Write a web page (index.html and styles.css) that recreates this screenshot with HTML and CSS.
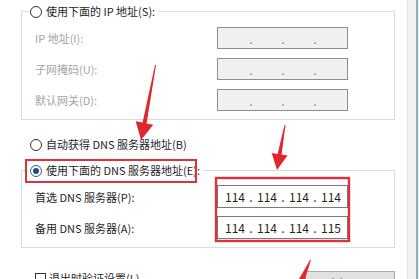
FILE: index.html
```html
<!DOCTYPE html>
<html>

<head>
	<title>Internet 协议版本 4 (TCP/IPv4) 属性</title>
	<meta charset="UTF-8">
	<meta name="viewport" content="width=device-width, initial-scale=1.0">
	<link rel="stylesheet" href="styles.css">
</head>

<body>
	<div class="window">
		<div class="dialog">
			<fieldset class="group">
				<legend class="opt"><span class="radio"></span>使用下面的 IP 地址(S):</legend>
				<div class="rows">
					<span class="lbl off">IP 地址(I):</span>
					<div class="ip off"><span class="seg"></span><span class="dot">.</span><span class="seg"></span><span class="dot">.</span><span class="seg"></span><span class="dot">.</span><span class="seg"></span></div>
					<span class="lbl off">子网掩码(U):</span>
					<div class="ip off"><span class="seg"></span><span class="dot">.</span><span class="seg"></span><span class="dot">.</span><span class="seg"></span><span class="dot">.</span><span class="seg"></span></div>
					<span class="lbl off">默认网关(D):</span>
					<div class="ip off"><span class="seg"></span><span class="dot">.</span><span class="seg"></span><span class="dot">.</span><span class="seg"></span><span class="dot">.</span><span class="seg"></span></div>
				</div>
			</fieldset>

			<div class="opt single"><span class="radio"></span>自动获得 DNS 服务器地址(B)</div>

			<fieldset class="group dns">
				<legend class="opt"><span class="radio on"></span>使用下面的 DNS 服务器地址(E):</legend>
				<div class="rows">
					<span class="lbl">首选 DNS 服务器(P):</span>
					<div class="ip"><span class="seg">114</span><span class="dot">.</span><span class="seg">114</span><span class="dot">.</span><span class="seg">114</span><span class="dot">.</span><span class="seg">114</span></div>
					<span class="lbl">备用 DNS 服务器(A):</span>
					<div class="ip"><span class="seg">114</span><span class="dot">.</span><span class="seg">114</span><span class="dot">.</span><span class="seg">114</span><span class="dot">.</span><span class="seg">115</span></div>
				</div>
			</fieldset>

			<div class="foot">
				<label class="check"><span class="box"></span>退出时验证设置(L)</label>
				<button class="btn">高级(V)...</button>
			</div>
		</div>
		<div class="frame"></div>

		<!-- red annotations drawn over the dialog -->
		<svg class="marks" width="419" height="279" viewBox="0 0 419 279">
			<rect x="26" y="160" width="170" height="22" fill="none" stroke="#d8343b" stroke-width="2" />
			<rect x="216" y="178" width="133" height="63" fill="none" stroke="#d8343b" stroke-width="2.4" />
			<polygon points="156,65 146.6,123.4 153.3,124.8 141,140 135.7,121.2 142.6,122.6 155,65" fill="#e2262d" />
			<polygon points="285.5,125 281.6,154.5 287.5,155.5 277,170 271.7,152.9 277.6,153.9 284.5,125" fill="#e2262d" />
			<polygon points="311,260 305,279 299,279 310,260" fill="#e2262d" />
		</svg>
	</div>
</body>

</html>
```

FILE: styles.css
```css
* {
	box-sizing: border-box;
}

body {
	font-family: "Noto Sans CJK SC", "Noto Sans", sans-serif;
	font-size: 11px;
	color: #1e1e1e;
	background-color: #fff;
	margin: 0;
	padding: 0;
}

.window {
	position: relative;
	display: flex;
	height: 279px;
	overflow: hidden;
}

.dialog {
	width: 407px;
	padding: 3px 12px 0 21px;
}

.frame {
	width: 12px;
	background: linear-gradient(to right, #e2e2e2 0 1px, #f1f1f1 1px 9px, #8db0bc 9px 11px, #e6edef 11px);
}

.group {
	margin: 0;
	min-width: 0;
	border: 1px solid #dcdcdc;
	padding: 7px 0 8px 13px;
}

.opt {
	display: flex;
	align-items: center;
	gap: 4px;
	height: 17px;
	line-height: 17px;
	white-space: nowrap;
}

legend.opt {
	margin-left: -6px;
	padding: 0 3px 0 1px;
}

.single {
	margin-top: 16px;
	padding-left: 9px;
}

.radio {
	width: 12px;
	height: 12px;
	border: 1px solid #333;
	border-radius: 50%;
	background-color: #fff;
	display: flex;
	align-items: center;
	justify-content: center;
}

.radio.on {
	border-color: #2f5e96;
}

.radio.on::after {
	content: "";
	width: 6px;
	height: 6px;
	border-radius: 50%;
	background-color: #1f4f8a;
}

.rows {
	display: grid;
	grid-template-columns: 182px 131px;
	grid-auto-rows: 22px;
	row-gap: 9px;
	align-items: center;
}

.dns {
	margin-top: 9px;
	padding-top: 6px;
}

.dns .rows {
	grid-auto-rows: 23px;
	row-gap: 8px;
}

.lbl {
	white-space: nowrap;
}

.lbl.off {
	color: #a3a3a3;
}

.ip {
	height: 100%;
	display: flex;
	align-items: center;
	padding-left: 3px;
	border: 1px solid #7a7a7a;
	background-color: #fff;
	font-size: 12px;
	color: #222;
}

.ip.off {
	border-color: #8e8e8e;
	background-color: #f0f0f0;
	color: #8a8a8a;
}

.seg {
	width: 28px;
	text-align: center;
}

.dot {
	width: 4px;
	text-align: center;
}

.foot {
	margin-top: 23px;
	padding-left: 14px;
	display: flex;
	justify-content: space-between;
	align-items: flex-start;
}

.check {
	display: flex;
	align-items: center;
	gap: 3px;
	height: 13px;
	line-height: 13px;
	margin-top: 1px;
}

.box {
	width: 11px;
	height: 11px;
	border: 1px solid #333;
	background-color: #fff;
}

.btn {
	width: 90px;
	height: 24px;
	margin: 0;
	padding: 0;
	font-family: inherit;
	font-size: 11px;
	color: #1e1e1e;
	border: 1px solid #adadad;
	background-color: #e1e1e1;
}

.marks {
	position: absolute;
	left: 0;
	top: 0;
	pointer-events: none;
}
```
